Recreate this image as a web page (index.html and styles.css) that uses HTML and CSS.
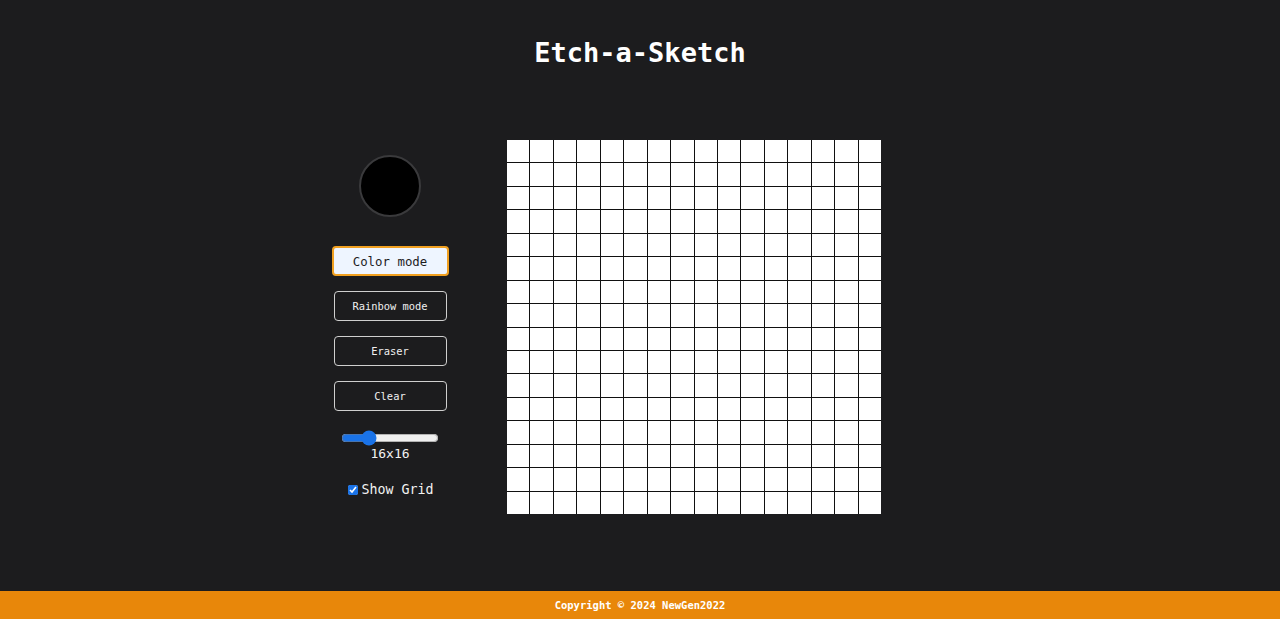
FILE: index.html
```html
<!DOCTYPE html>
<html lang="en">
<head>
<meta charset="utf-8">
<title>Etch-a-Sketch</title>
<link rel="stylesheet" href="styles.css">
</head>
<body>
<div class="page">
  <h1 class="title">Etch-a-Sketch</h1>
  <main class="main">
    <div class="controls">
      <div class="color-picker"></div>
      <button class="btn btn-active">Color mode</button>
      <button class="btn">Rainbow mode</button>
      <button class="btn">Eraser</button>
      <button class="btn">Clear</button>
      <input class="slider" type="range" min="1" max="64" value="16">
      <div class="size-label">16x16</div>
      <label class="grid-toggle"><input type="checkbox" checked>Show Grid</label>
    </div>
    <div class="board" id="board"></div>
  </main>
  <footer class="footer">Copyright © 2024 NewGen2022</footer>
</div>
<script>
  var b = document.getElementById('board');
  for (var i = 0; i < 256; i++) { var c = document.createElement('div'); c.className = 'cell'; b.appendChild(c); }
</script>
</body>
</html>
```

FILE: styles.css
```css
* { box-sizing: border-box; }
html, body { margin: 0; padding: 0; }
body {
  background: #1c1c1e;
  color: #f2f2f2;
  font-family: "DejaVu Sans Mono", "Liberation Mono", monospace;
}
.page {
  min-height: 619px;
  display: flex;
  flex-direction: column;
}
.title {
  margin: 0;
  padding-top: 36px;
  height: 140px;
  text-align: center;
  font-size: 27px;
  font-weight: bold;
  line-height: 34px;
  color: #ffffff;
}
.main {
  flex: 1;
  display: flex;
  justify-content: center;
  align-items: flex-start;
  gap: 37px;
  padding-right: 89px;
}
.controls {
  width: 160px;
  display: flex;
  flex-direction: column;
  align-items: center;
  padding-top: 15px;
}
.color-picker {
  width: 62px;
  height: 62px;
  border-radius: 50%;
  background: #000;
  border: 2px solid #3a3a3c;
  margin-bottom: 29px;
}
.btn {
  width: 113px;
  height: 30px;
  background: transparent;
  border: 1px solid #cfcfcf;
  border-radius: 4px;
  color: #f0f0f0;
  font-family: "DejaVu Sans Mono", "Liberation Mono", monospace;
  font-size: 10.4px;
  margin-bottom: 15px;
  padding: 0;
}
.btn-active {
  width: 117px;
  background: #eef5ff;
  border: 2px solid #f0a020;
  color: #1c1c1e;
  font-size: 12.4px;
}
.slider {
  width: 98px;
  margin: 4px 0 0 0;
  accent-color: #1a73e8;
}
.size-label {
  font-size: 13px;
  margin-top: -1px;
  height: 18px;
  line-height: 18px;
}
.grid-toggle {
  margin-top: 19px;
  font-size: 13.3px;
  display: flex;
  align-items: center;
  margin-left: 2px;
}
.grid-toggle input {
  width: 10px;
  height: 10px;
  margin: 0 3px 0 0;
  accent-color: #1a73e8;
}
.board {
  width: 374px;
  height: 374px;
  display: grid;
  grid-template-columns: repeat(16, 1fr);
  grid-template-rows: repeat(16, 1fr);
  gap: 1px;
  background: #111111;
}
.cell { background: #ffffff; }
.footer {
  height: 28px;
  background: #e8870a;
  color: #ffffff;
  font-size: 10.5px;
  font-weight: bold;
  text-align: center;
  line-height: 28px;
}
```
